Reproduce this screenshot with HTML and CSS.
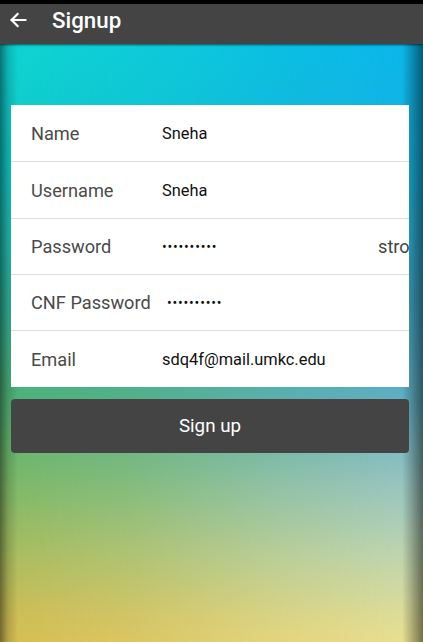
FILE: index.html
```html
<!DOCTYPE html>
<html>
<head>
<meta charset="utf-8">
<link rel="stylesheet" href="styles.css">
</head>
<body>
<div class="screen">
  <div class="statusbar"></div>
  <header class="appbar">
    <svg class="back" width="22" height="22" viewBox="0 0 24 24"><path d="M20 12H5M11.5 5.5L5 12l6.5 6.5" fill="none" stroke="#fff" stroke-width="2.4" stroke-linecap="square"/></svg>
    <span class="title">Signup</span>
  </header>
  <main class="content">
    <div class="card">
      <div class="row tall"><span class="label">Name</span><span class="value">Sneha</span></div>
      <div class="row tall"><span class="label">Username</span><span class="value">Sneha</span></div>
      <div class="row"><span class="label">Password</span><span class="value dots">••••••••••</span><span class="strength">strong</span></div>
      <div class="row"><span class="label">CNF Password</span><span class="value dots cnf">••••••••••</span></div>
      <div class="row"><span class="label">Email</span><span class="value">sdq4f@mail.umkc.edu</span></div>
    </div>
    <button class="signup">Sign up</button>
  </main>
</div>
</body>
</html>
```
FILE: styles.css
```css
* { box-sizing: border-box; }
html, body { margin: 0; padding: 0; }
body { width: 423px; height: 642px; overflow: hidden; font-family: Roboto, "Liberation Sans", sans-serif; }
.screen { width: 423px; height: 642px; display: flex; flex-direction: column; background: #000; }
.statusbar { height: 4px; background: #000; }
.appbar {
  height: 40px; background: #444; display: flex; align-items: center;
  padding-left: 7px; position: relative; z-index: 2;
  box-shadow: 0 1px 2px rgba(0,0,0,0.6);
}
.back { margin-top: -8px; }
.title { color: #fff; font-size: 22.3px; font-weight: 500; margin-left: 23px; margin-top: -9px; }
.content {
  flex: 1; position: relative; padding: 61px 14px 0 11px;
  background: linear-gradient(to bottom, #0fd5d2 0px, #10c8c8 120px, #2fb79c 260px, #4db276 350px, #77b868 430px, #a9bd5e 510px, #cdbd55 570px, #d6be52 597px);
}
.content::before {
  content: ""; position: absolute; inset: 0;
  background: linear-gradient(to bottom, #0ab6ea 0px, #1ab0dc 130px, #3fa6c6 260px, #62afc2 360px, #98c4c0 440px, #bed4b0 510px, #dcdc98 570px, #e8de90 597px);
  -webkit-mask-image: linear-gradient(to right, transparent 0%, rgba(0,0,0,0.25) 30%, rgba(0,0,0,0.7) 65%, #000 95%);
  mask-image: linear-gradient(to right, transparent 0%, rgba(0,0,0,0.25) 30%, rgba(0,0,0,0.7) 65%, #000 95%);
}
.content::after {
  content: ""; position: absolute; inset: 0; pointer-events: none;
  background: linear-gradient(to right, rgba(0,0,0,0.45) 0px, rgba(0,0,0,0.15) 8px, rgba(0,0,0,0) 18px, rgba(0,0,0,0) 402px, rgba(0,0,0,0.2) 411px, rgba(0,0,0,0.5) 423px);
}
.card { position: relative; z-index: 1; background: #fff; width: 398px; overflow: hidden; }
.row {
  height: 56px; display: flex; align-items: center; padding-left: 20px;
  border-bottom: 1px solid #ddd; white-space: nowrap; position: relative;
}
.row.tall { height: 57px; }
.row:last-child { border-bottom: none; }
.label { width: 131px; font-size: 18.2px; color: #4a4a4a; flex: none; }
.value { font-size: 16.4px; color: #111; flex: none; }
.dots { font-size: 14px; letter-spacing: 0.8px; }
.cnf { margin-left: 5px; }
.strength { position: absolute; left: 367px; font-size: 18.2px; color: #444; }
.signup {
  position: relative; z-index: 1; display: block;
  margin-top: 12px; width: 398px; height: 54px; border: none; border-radius: 4px;
  background: #444; color: #fff; font-family: Roboto, "Liberation Sans", sans-serif; font-size: 18.8px;
}
```
